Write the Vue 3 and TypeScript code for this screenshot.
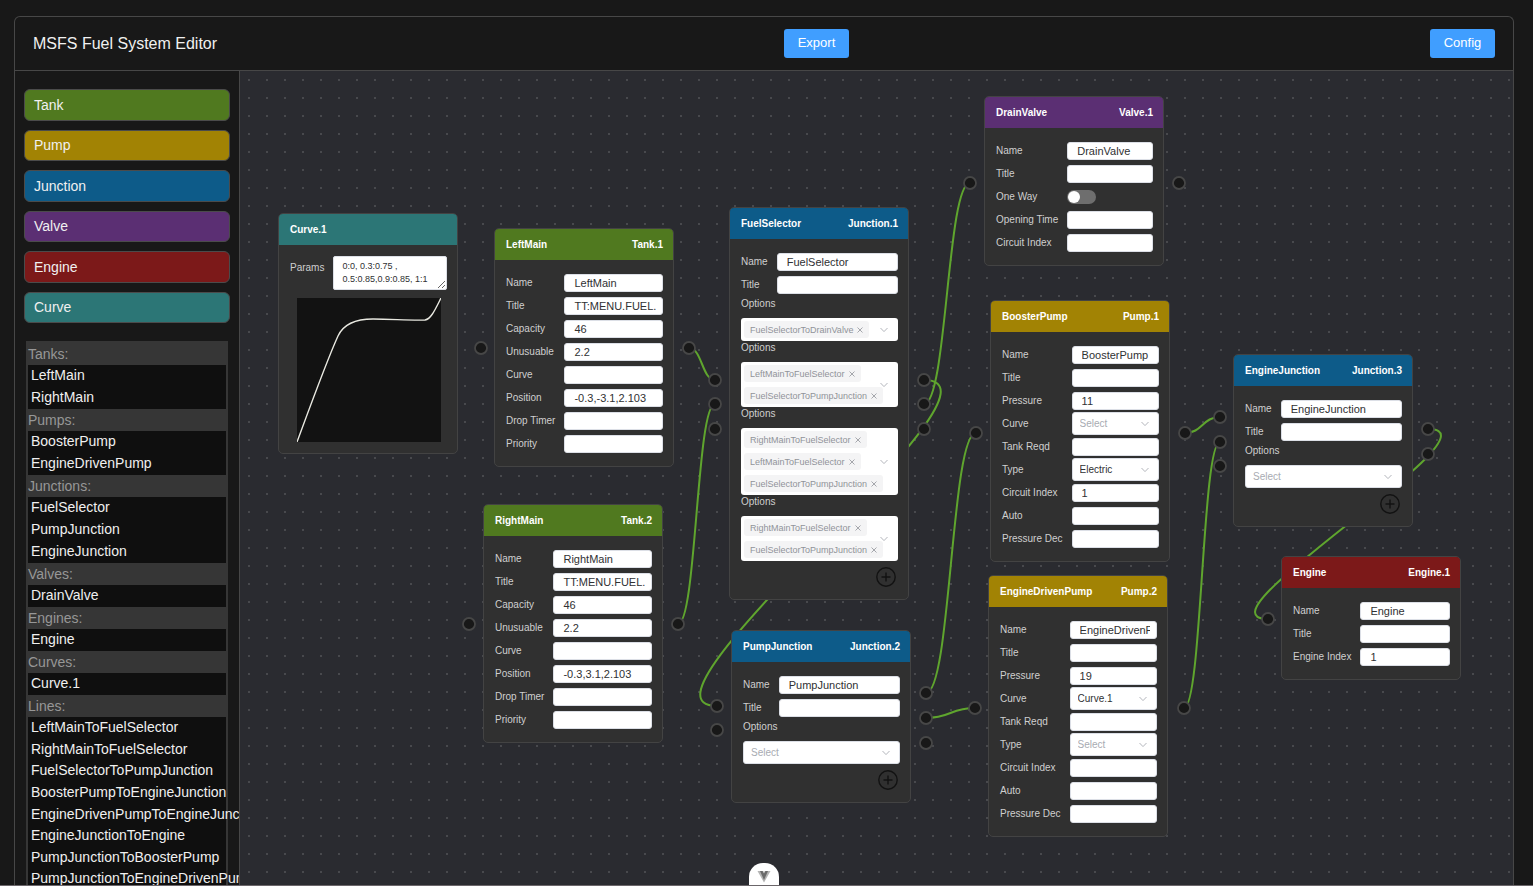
<script setup lang="ts">
import { ref } from 'vue'

type Kind = 'tank' | 'pump' | 'junction' | 'valve' | 'engine' | 'curve'

interface Field {
  label: string
  value?: string
  type?: 'text' | 'select' | 'switch'
}

interface GraphNode {
  id: string
  kind: Kind
  name?: string
  x: number
  y: number
  fields?: Field[]
  options?: string[][]
}

interface Point {
  x: number
  y: number
}

const palette: { kind: Kind; label: string }[] = [
  { kind: 'tank', label: 'Tank' },
  { kind: 'pump', label: 'Pump' },
  { kind: 'junction', label: 'Junction' },
  { kind: 'valve', label: 'Valve' },
  { kind: 'engine', label: 'Engine' },
  { kind: 'curve', label: 'Curve' },
]

const groups: { label: string; items: string[]; long?: boolean }[] = [
  { label: 'Tanks:', items: ['LeftMain', 'RightMain'] },
  { label: 'Pumps:', items: ['BoosterPump', 'EngineDrivenPump'] },
  { label: 'Junctions:', items: ['FuelSelector', 'PumpJunction', 'EngineJunction'] },
  { label: 'Valves:', items: ['DrainValve'] },
  { label: 'Engines:', items: ['Engine'] },
  { label: 'Curves:', items: ['Curve.1'] },
  {
    label: 'Lines:',
    long: true,
    items: [
      'LeftMainToFuelSelector',
      'RightMainToFuelSelector',
      'FuelSelectorToPumpJunction',
      'BoosterPumpToEngineJunction',
      'EngineDrivenPumpToEngineJunction',
      'EngineJunctionToEngine',
      'PumpJunctionToBoosterPump',
      'PumpJunctionToEngineDrivenPump',
    ],
  },
]

const tankFields = (name: string, position: string): Field[] => [
  { label: 'Name', value: name },
  { label: 'Title', value: 'TT:MENU.FUEL.' },
  { label: 'Capacity', value: '46' },
  { label: 'Unusuable', value: '2.2' },
  { label: 'Curve' },
  { label: 'Position', value: position },
  { label: 'Drop Timer' },
  { label: 'Priority' },
]

const pumpFields = (name: string, pressure: string, curve: string, kind: string, circuit: string): Field[] => [
  { label: 'Name', value: name },
  { label: 'Title' },
  { label: 'Pressure', value: pressure },
  { label: 'Curve', value: curve, type: 'select' },
  { label: 'Tank Reqd' },
  { label: 'Type', value: kind, type: 'select' },
  { label: 'Circuit Index', value: circuit },
  { label: 'Auto' },
  { label: 'Pressure Dec' },
]

const nodes = ref<GraphNode[]>([
  { id: 'Curve.1', kind: 'curve', x: 38, y: 142 },
  { id: 'Tank.1', kind: 'tank', name: 'LeftMain', x: 254, y: 157, fields: tankFields('LeftMain', '-0.3,-3.1,2.103') },
  { id: 'Tank.2', kind: 'tank', name: 'RightMain', x: 243, y: 433, fields: tankFields('RightMain', '-0.3,3.1,2.103') },
  {
    id: 'Junction.1',
    kind: 'junction',
    name: 'FuelSelector',
    x: 489,
    y: 136,
    fields: [{ label: 'Name', value: 'FuelSelector' }, { label: 'Title' }],
    options: [
      ['FuelSelectorToDrainValve'],
      ['LeftMainToFuelSelector', 'FuelSelectorToPumpJunction'],
      ['RightMainToFuelSelector', 'LeftMainToFuelSelector', 'FuelSelectorToPumpJunction'],
      ['RightMainToFuelSelector', 'FuelSelectorToPumpJunction'],
    ],
  },
  {
    id: 'Junction.2',
    kind: 'junction',
    name: 'PumpJunction',
    x: 491,
    y: 559,
    fields: [{ label: 'Name', value: 'PumpJunction' }, { label: 'Title' }],
    options: [[]],
  },
  {
    id: 'Valve.1',
    kind: 'valve',
    name: 'DrainValve',
    x: 744,
    y: 25,
    fields: [
      { label: 'Name', value: 'DrainValve' },
      { label: 'Title' },
      { label: 'One Way', type: 'switch' },
      { label: 'Opening Time' },
      { label: 'Circuit Index' },
    ],
  },
  { id: 'Pump.1', kind: 'pump', name: 'BoosterPump', x: 750, y: 229, fields: pumpFields('BoosterPump', '11', '', 'Electric', '1') },
  { id: 'Pump.2', kind: 'pump', name: 'EngineDrivenPump', x: 748, y: 504, fields: pumpFields('EngineDrivenPump', '19', 'Curve.1', '', '') },
  {
    id: 'Junction.3',
    kind: 'junction',
    name: 'EngineJunction',
    x: 993,
    y: 283,
    fields: [{ label: 'Name', value: 'EngineJunction' }, { label: 'Title' }],
    options: [[]],
  },
  {
    id: 'Engine.1',
    kind: 'engine',
    name: 'Engine',
    x: 1041,
    y: 485,
    fields: [{ label: 'Name', value: 'Engine' }, { label: 'Title' }, { label: 'Engine Index', value: '1' }],
  },
])

const params = ref('0:0, 0.3:0.75 ,\n0.5:0.85,0.9:0.85, 1:1')

const p = (x: number, y: number): Point => ({ x, y })

const ports: Point[] = [
  p(241, 277), p(449, 277),
  p(229, 553), p(438, 553),
  p(475, 309), p(475, 333), p(475, 358),
  p(684, 309), p(684, 333), p(684, 358),
  p(477, 635), p(477, 659),
  p(686, 622), p(686, 647), p(686, 672),
  p(730, 112), p(939, 112),
  p(736, 362), p(945, 362),
  p(735, 637), p(944, 637),
  p(980, 346), p(980, 371), p(980, 395),
  p(1188, 358), p(1188, 383),
  p(1028, 548),
]

const links: [Point, Point][] = [
  [p(449, 277), p(475, 309)],
  [p(438, 553), p(475, 333)],
  [p(684, 309), p(477, 635)],
  [p(684, 333), p(730, 112)],
  [p(686, 622), p(736, 362)],
  [p(686, 647), p(735, 637)],
  [p(945, 362), p(980, 346)],
  [p(944, 637), p(980, 371)],
  [p(1188, 358), p(1028, 548)],
]

function linkPath([a, b]: [Point, Point]): string {
  const bend = Math.abs(b.x - a.x) / 2
  return `M${a.x} ${a.y} C${a.x + bend} ${a.y} ${b.x - bend} ${b.y} ${b.x} ${b.y}`
}
</script>

<template>
  <div class="page">
    <div class="frame">
      <header class="topbar">
        <h1>MSFS Fuel System Editor</h1>
        <button type="button" class="primary">Export</button>
        <button type="button" class="primary">Config</button>
      </header>
      <div class="workspace">
        <aside class="sidebar">
          <div class="palette">
            <button v-for="item in palette" :key="item.kind" type="button" class="palette-item" :class="item.kind">
              {{ item.label }}
            </button>
          </div>
          <nav class="outline">
            <section v-for="group in groups" :key="group.label">
              <h2>{{ group.label }}</h2>
              <ul :class="{ long: group.long }">
                <li v-for="item in group.items" :key="item">{{ item }}</li>
              </ul>
            </section>
          </nav>
        </aside>
        <main class="canvas">
          <svg class="links">
            <defs>
              <pattern id="dots" width="18" height="18" patternUnits="userSpaceOnUse">
                <rect x="8" y="8" width="2" height="2" fill="#48494d" />
              </pattern>
            </defs>
            <rect width="100%" height="100%" fill="url(#dots)" />
            <path v-for="(link, i) in links" :key="i" :d="linkPath(link)" fill="none" stroke="#5fa52e" stroke-width="2" />
            <circle v-for="(port, i) in ports" :key="'p' + i" :cx="port.x" :cy="port.y" r="6" fill="#181818" stroke="#474747" stroke-width="1.8" />
          </svg>
          <article v-for="node in nodes" :key="node.id" class="node" :style="{ left: node.x + 'px', top: node.y + 'px' }">
            <header class="node-head" :class="node.kind">
              <span v-if="node.name">{{ node.name }}</span>
              <span>{{ node.id }}</span>
            </header>
            <div class="node-body">
              <template v-if="node.kind === 'curve'">
                <div class="params">
                  <label for="curve-params">Params</label>
                  <textarea id="curve-params" v-model="params" spellcheck="false"></textarea>
                </div>
                <svg class="plot" viewBox="0 0 144 144">
                  <path d="M0 144 C10 117 30 62 41 38 C47 25 62 21 76 21 C95 21 112 22.5 128 22 C134 21 138 12 144 0" fill="none" stroke="#e8e8e0" stroke-width="1.4" />
                </svg>
              </template>
              <div v-if="node.fields" class="fields">
                <template v-for="field in node.fields" :key="field.label">
                  <label :for="node.id + field.label">{{ field.label }}</label>
                  <input v-if="field.type === 'switch'" :id="node.id + field.label" type="checkbox" class="switch" />
                  <span v-else-if="field.type === 'select'" class="select">
                    <select :id="node.id + field.label" :class="{ empty: !field.value }">
                      <option>{{ field.value || 'Select' }}</option>
                    </select>
                    <svg class="chevron" viewBox="0 0 8 6"><path d="M0.5 1 L4 4.6 L7.5 1" /></svg>
                  </span>
                  <input v-else :id="node.id + field.label" type="text" class="text" :value="field.value" spellcheck="false" />
                </template>
              </div>
              <div v-if="node.options" class="options">
                <div v-for="(tags, i) in node.options" :key="i" class="option">
                  <template v-if="tags.length">
                    <span :id="node.id + 'option' + i" class="caption">Options</span>
                    <div class="tags" role="group" :aria-labelledby="node.id + 'option' + i">
                      <span v-for="tag in tags" :key="tag" class="tag">
                        {{ tag }}
                        <button type="button" :aria-label="'Remove ' + tag">
                          <svg viewBox="0 0 6 6"><path d="M0.5 0.5 L5.5 5.5 M5.5 0.5 L0.5 5.5" /></svg>
                        </button>
                      </span>
                      <svg class="chevron" viewBox="0 0 8 6"><path d="M0.5 1 L4 4.6 L7.5 1" /></svg>
                    </div>
                  </template>
                  <template v-else>
                    <label :for="node.id + 'option' + i" class="caption">Options</label>
                    <span class="select">
                      <select :id="node.id + 'option' + i" class="empty">
                        <option>Select</option>
                      </select>
                      <svg class="chevron" viewBox="0 0 8 6"><path d="M0.5 1 L4 4.6 L7.5 1" /></svg>
                    </span>
                  </template>
                </div>
                <button type="button" class="add" aria-label="Add option">
                  <svg viewBox="0 0 20 20"><circle cx="10" cy="10" r="9.2" /><path d="M10 5.5 V14.5 M5.5 10 H14.5" /></svg>
                </button>
              </div>
            </div>
          </article>
        </main>
      </div>
    </div>
    <button type="button" class="devtools" aria-label="Toggle devtools">
      <svg viewBox="0 0 16 14">
        <path d="M1.5 1 H14.5 L8 12.5 Z" fill="#b4b4b4" />
        <path d="M4 1 H12 L8 10 Z" fill="#6a6a6a" />
        <path d="M6.6 1 H9.4 L8 3.4 Z" fill="#d8d8d8" />
      </svg>
    </button>
  </div>
</template>

<style>
body {
  background: #181818;
}
</style>

<style scoped>
* {
  box-sizing: border-box;
}

.page {
  position: relative;
  display: flex;
  height: 100vh;
  padding: 16px 19px 0 14px;
  overflow: hidden;
  border-bottom: 1px solid #6b666a;
  background: #181818;
  color: #f0f0f0;
  font-family: "Liberation Sans", Arial, Helvetica, sans-serif;
  font-size: 14px;
}

button,
input,
select,
textarea {
  margin: 0;
  font-family: inherit;
}

.frame {
  display: flex;
  flex: 1;
  flex-direction: column;
  min-width: 0;
  border: 1px solid #474747;
  border-bottom: 0;
  border-radius: 6px 6px 0 0;
}

.topbar {
  display: flex;
  flex: none;
  align-items: center;
  justify-content: space-between;
  height: 54px;
  padding: 0 18px;
  border-bottom: 1px solid #474747;
}

.topbar h1 {
  width: 170px;
  margin: 0;
  font-size: 16px;
  font-weight: 400;
  white-space: nowrap;
}

.primary {
  width: 65px;
  height: 29px;
  padding: 0 0 2px;
  border: 0;
  border-radius: 3px;
  background: #409eff;
  color: #fff;
  font-size: 13px;
  font-weight: 500;
}

.workspace {
  display: flex;
  flex: 1;
  min-height: 0;
}

.sidebar {
  flex: none;
  width: 225px;
  padding: 18px 9px 0;
  overflow: hidden;
  border-right: 1px solid #474747;
}

.palette {
  display: grid;
  grid-auto-rows: 1fr;
  gap: 9px;
  height: 234px;
}

.palette-item {
  padding: 0 9px;
  border: 1px solid #4b4b4b;
  border-radius: 6px;
  color: #f0f0f0;
  font-size: 14px;
  text-align: left;
}

.tank { background: #50791f; }
.pump { background: #a28304; }
.junction { background: #0d5b89; }
.valve { background: #5b2f73; }
.engine { background: #7c1919; }
.curve { background: #2c7676; }

.outline {
  margin: 18px 2px 0;
  padding: 2px 2px 0;
  background: #363636;
}

.outline h2 {
  margin: 0;
  color: #979797;
  font-size: 14px;
  font-weight: 400;
  line-height: 22px;
}

.outline ul {
  margin: 0;
  padding: 0 3px;
  background: #0f0f0f;
  list-style: none;
  line-height: 21px;
  white-space: nowrap;
}

.outline li {
  height: 22px;
}

.outline ul.long {
  display: grid;
  grid-auto-rows: 1fr;
  height: 173px;
}

.outline .long li {
  height: auto;
  min-height: 0;
}

.canvas {
  position: relative;
  flex: 1;
  min-width: 0;
  overflow: hidden;
  background: #2a2b30;
}

.links {
  position: absolute;
  inset: 0;
  width: 100%;
  height: 100%;
}

.node {
  position: absolute;
  width: 180px;
  overflow: hidden;
  border: 1px solid #434343;
  border-radius: 5px;
  background: #303030;
  color: #cfcfcf;
  font-size: 10px;
}

.node-head {
  display: flex;
  align-items: center;
  justify-content: space-between;
  height: 31px;
  padding: 0 10px 0 11px;
  color: #fff;
  font-weight: 700;
}

.node-body {
  padding: 11px 10px 11px 11px;
}

.fields {
  display: grid;
  grid-template-columns: max-content 1fr;
  grid-auto-rows: 23px;
  column-gap: 9px;
  align-items: center;
}

.text {
  width: 100%;
  height: 18px;
  padding: 0 6px 0 9px;
  border: 1px solid #dcdfe6;
  border-radius: 3px;
  background: #fff;
  color: #303133;
  font-size: 11px;
}

.switch {
  position: relative;
  width: 29px;
  height: 14px;
  appearance: none;
  border-radius: 7px;
  background: #6e6e6e;
}

.switch::before {
  content: "";
  position: absolute;
  top: 1px;
  left: 1px;
  width: 12px;
  height: 12px;
  border-radius: 50%;
  background: #fff;
}

.select {
  position: relative;
  display: block;
  height: 23px;
}

.select select {
  display: block;
  width: 100%;
  height: 23px;
  padding: 0 20px 0 7px;
  appearance: none;
  border: 1px solid #dcdfe6;
  border-radius: 3px;
  background: #fff;
  color: #303133;
  font-size: 10px;
}

.select select.empty {
  color: #a8abb2;
}

.chevron {
  position: absolute;
  top: 50%;
  right: 10px;
  width: 8px;
  height: 6px;
  margin-top: -3px;
  fill: none;
  stroke: #b4b6bc;
  stroke-width: 1;
  pointer-events: none;
}

.options {
  padding: 1px 0;
}

.caption {
  display: block;
  height: 15px;
  margin-bottom: 6px;
  line-height: 14px;
}

.tags {
  position: relative;
  display: flex;
  flex-direction: column;
  align-items: flex-start;
  gap: 5px;
  padding: 3px;
  border-radius: 3px;
  background: #fff;
}

.tag {
  display: flex;
  align-items: center;
  gap: 4px;
  height: 17px;
  padding: 0 6px;
  border-radius: 3px;
  background: #f4f4f5;
  color: #909399;
  font-size: 9px;
  white-space: nowrap;
}

.tag button {
  display: flex;
  padding: 0;
  border: 0;
  background: none;
}

.tag svg {
  width: 6px;
  height: 6px;
  stroke: #909399;
  stroke-width: 0.8;
}

.add {
  display: block;
  width: 20px;
  height: 20px;
  margin: 6px 2px 0 auto;
  padding: 0;
  border: 0;
  background: none;
}

.add svg {
  display: block;
  fill: none;
  stroke: #121212;
  stroke-width: 1.4;
}

.params {
  display: flex;
  gap: 9px;
}

.params label {
  line-height: 24px;
}

.params textarea {
  flex: 1;
  min-width: 0;
  height: 34px;
  padding: 3px 8px;
  overflow: hidden;
  border: 1px solid #dcdfe6;
  border-radius: 2px;
  background: #fff;
  color: #303133;
  font-size: 9px;
  line-height: 13px;
  white-space: pre;
}

.plot {
  display: block;
  width: 144px;
  height: 144px;
  margin: 8px auto 0;
  background: #121212;
}

.devtools {
  position: absolute;
  bottom: 0;
  left: 749px;
  display: flex;
  justify-content: center;
  width: 30px;
  height: 22px;
  padding: 7px 0 0;
  border: 0;
  border-radius: 14px 14px 0 0;
  background: #fff;
}

.devtools svg {
  flex: none;
  width: 16px;
  height: 14px;
}
</style>
